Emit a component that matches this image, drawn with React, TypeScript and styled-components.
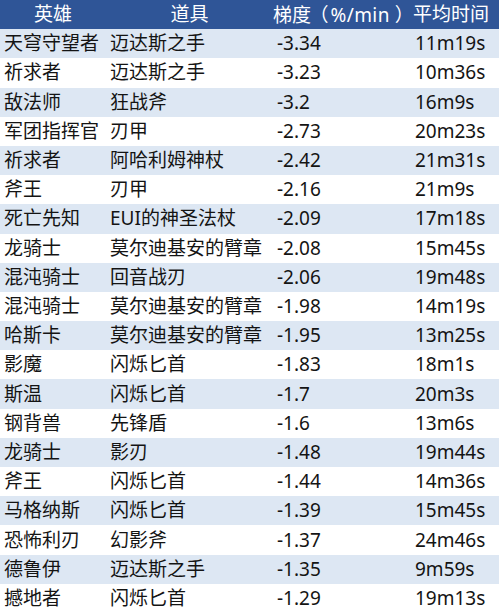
import * as React from 'react'
import styled, { createGlobalStyle } from 'styled-components'

const GlobalStyle = createGlobalStyle`
  html, body {
    margin: 0;
    padding: 0;
    background: #ffffff;
  }
`

type Row = [string, string, string, string]

const rows: Row[] = [
  ['天穹守望者', '迈达斯之手', '-3.34', '11m19s'],
  ['祈求者', '迈达斯之手', '-3.23', '10m36s'],
  ['敌法师', '狂战斧', '-3.2', '16m9s'],
  ['军团指挥官', '刃甲', '-2.73', '20m23s'],
  ['祈求者', '阿哈利姆神杖', '-2.42', '21m31s'],
  ['斧王', '刃甲', '-2.16', '21m9s'],
  ['死亡先知', 'EUI的神圣法杖', '-2.09', '17m18s'],
  ['龙骑士', '莫尔迪基安的臂章', '-2.08', '15m45s'],
  ['混沌骑士', '回音战刃', '-2.06', '19m48s'],
  ['混沌骑士', '莫尔迪基安的臂章', '-1.98', '14m19s'],
  ['哈斯卡', '莫尔迪基安的臂章', '-1.95', '13m25s'],
  ['影魔', '闪烁匕首', '-1.83', '18m1s'],
  ['斯温', '闪烁匕首', '-1.7', '20m3s'],
  ['钢背兽', '先锋盾', '-1.6', '13m6s'],
  ['龙骑士', '影刃', '-1.48', '19m44s'],
  ['斧王', '闪烁匕首', '-1.44', '14m36s'],
  ['马格纳斯', '闪烁匕首', '-1.39', '15m45s'],
  ['恐怖利刃', '幻影斧', '-1.37', '24m46s'],
  ['德鲁伊', '迈达斯之手', '-1.35', '9m59s'],
  ['撼地者', '闪烁匕首', '-1.29', '19m13s']
]

const Table = styled.div`
  display: grid;
  grid-template-rows: repeat(21, 1fr);
  width: 499px;
  height: 613px;
  overflow: hidden;
  font-family: 'Noto Sans', 'Noto Sans CJK SC', sans-serif;
  font-size: 19px;
  color: #141414;
`

const TableRow = styled.div<{ $shade: 'head' | 'band' | 'plain' }>`
  display: grid;
  grid-template-columns: 106px 167px 140px 86px;
  align-items: center;
  white-space: nowrap;
  background-color: ${({ $shade }) =>
    $shade === 'head' ? '#2f5597' : $shade === 'band' ? '#dde7f3' : '#ffffff'};
  color: ${({ $shade }) => ($shade === 'head' ? '#ffffff' : '#141414')};
`

const Cell = styled.div<{ $align?: 'left' | 'center'; $pad?: number }>`
  text-align: ${({ $align }) => $align ?? 'left'};
  padding-left: ${({ $pad }) => $pad ?? 4}px;
  line-height: 1;
  overflow: visible;
`

// half-width brackets, spaced like the source's full-width ones
const Paren = styled.span<{ $open?: boolean }>`
  font-family: 'Noto Sans CJK SC', sans-serif;
  font-feature-settings: 'halt';
  margin-left: ${({ $open }) => ($open ? 8 : 5)}px;
  margin-right: ${({ $open }) => ($open ? 2 : 0)}px;
`

const Unit = styled.span`
  letter-spacing: 0.4px;
`

export default function App() {
  return (
    <>
      <GlobalStyle />
      <Table>
        <TableRow $shade="head">
          <Cell $align="center" $pad={0}>英雄</Cell>
          <Cell $align="center" $pad={0}>道具</Cell>
          <Cell $pad={0}>
            梯度<Paren $open>（</Paren>
            <Unit>%/min</Unit>
            <Paren>）</Paren>
          </Cell>
          <Cell $pad={0}>平均时间</Cell>
        </TableRow>
        {rows.map((r, i) => (
          <TableRow key={i} $shade={i % 2 === 0 ? 'band' : 'plain'}>
            <Cell>{r[0]}</Cell>
            <Cell>{r[1]}</Cell>
            <Cell>{r[2]}</Cell>
            <Cell $pad={2}>{r[3]}</Cell>
          </TableRow>
        ))}
      </Table>
    </>
  )
}
